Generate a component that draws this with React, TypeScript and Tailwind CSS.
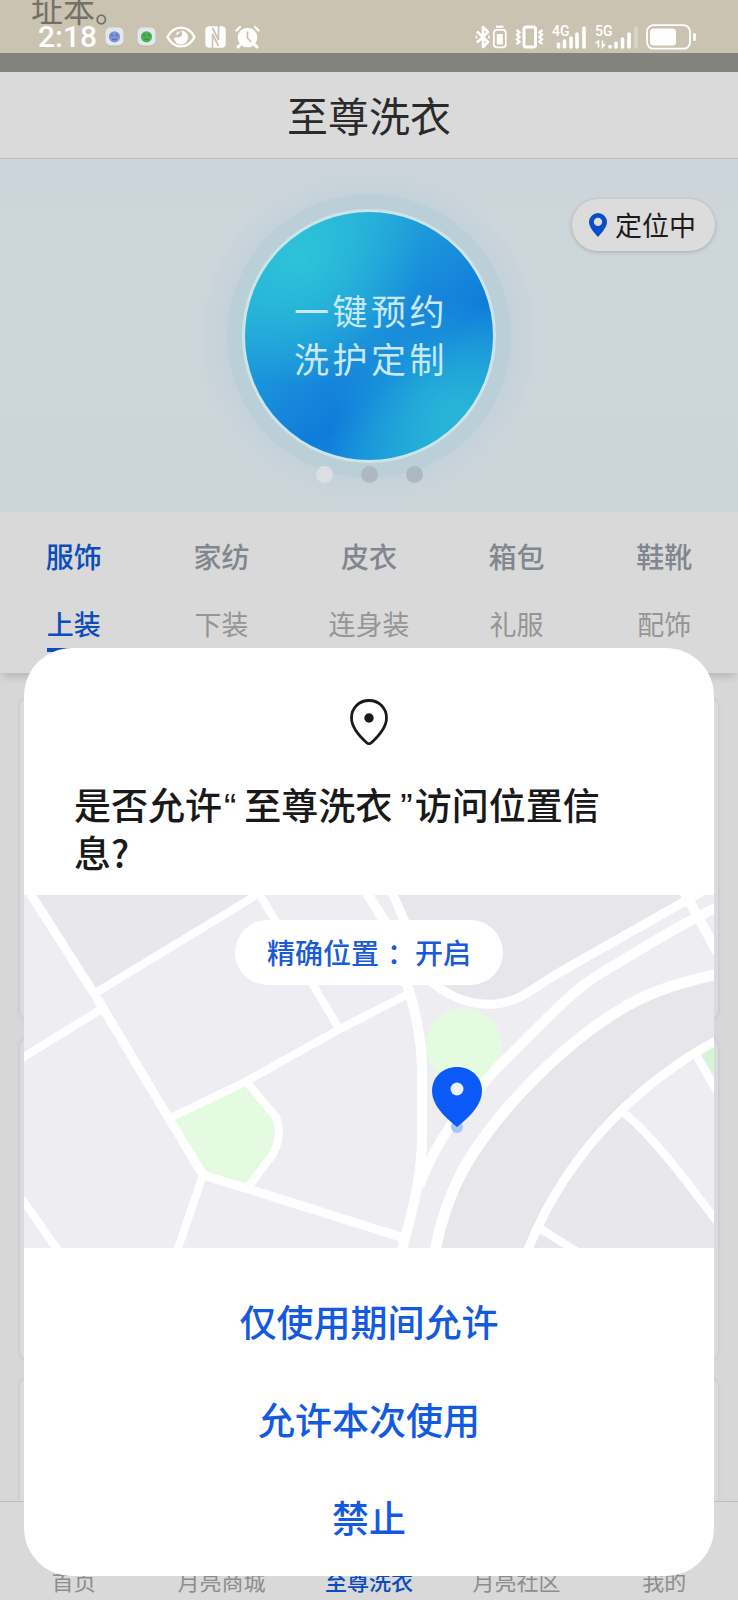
import { clsx } from "clsx"

const categories = ["服饰", "家纺", "皮衣", "箱包", "鞋靴"]
const subCategories = ["上装", "下装", "连身装", "礼服", "配饰"]
const navItems = ["首页", "月亮商城", "至尊洗衣", "月亮社区", "我的"]
const permissionActions = ["仅使用期间允许", "允许本次使用", "禁止"]

function NotificationIcon({ color, face }: { color: string; face: string }) {
  return (
    <svg className="h-5 w-[19px]" viewBox="0 0 19 20" aria-hidden="true">
      <rect x="0.5" y="1" width="18" height="18.5" rx="5" fill="#aeb3ad" />
      <rect x="0.5" y="0.5" width="18" height="18" rx="5" fill="#e3e9ea" />
      <circle cx="9.5" cy="9.8" r="5.6" fill={color} />
      <circle cx="7" cy="8.2" r="0.8" fill={face} />
      <circle cx="12" cy="8.2" r="0.8" fill={face} />
      <path d="M7 12q2.5 1.600 5 0" fill="none" stroke={face} strokeWidth="0.7" />
    </svg>
  )
}

function EyeIcon() {
  return (
    <svg className="h-[22px] w-[30px]" viewBox="0 0 30 22" aria-hidden="true">
      <path d="M1.500 11C8-1.500 22-1.500 28.500 11 22 23.500 8 23.500 1.500 11z" fill="none" stroke="#fff" strokeWidth="2.400" />
      <circle cx="15" cy="11.500" r="7" fill="#fff" />
      <path d="M8 6.500c2-3 5-4 7-3.500-1 2 3 4.500.5 7-2 2.500-5 1-7.500 2z" fill="#cbc3b2" />
      <path d="M10.500 8.500q1-2 3-2.500" fill="none" stroke="#fff" strokeWidth="1.500" />
    </svg>
  )
}

function NfcIcon() {
  return (
    <svg className="h-[22px] w-[21px]" viewBox="0 0 21 22" aria-hidden="true">
      <rect x="0.300" y="0.300" width="20.400" height="21.400" rx="4" fill="#fff" />
      <path d="M7.500 22V8l6 12M13.500 0v14l-6-12" fill="none" stroke="#cbc3b2" strokeWidth="1.700" />
    </svg>
  )
}

function AlarmIcon() {
  return (
    <svg className="h-6 w-[25px]" viewBox="0 0 25 24" aria-hidden="true">
      <circle cx="12.500" cy="12.500" r="9.800" fill="#fff" />
      <path d="M1.500 5.500 5 2M23.500 5.500 20 2" stroke="#fff" strokeWidth="2.400" strokeLinecap="round" />
      <path d="M6 19l-3 3M19 19l3 3" stroke="#fff" strokeWidth="3" strokeLinecap="round" />
      <path d="M12.500 6.500v6.500l3.500 4" fill="none" stroke="#cbc3b2" strokeWidth="1.800" />
    </svg>
  )
}

function BluetoothIcon() {
  return (
    <svg className="h-6 w-8" viewBox="0 0 32 24" aria-hidden="true">
      <path d="M2 6.500l11 10.500-5 5V2l5 5L2 17.500" fill="none" stroke="#fff" strokeWidth="2.600" strokeLinejoin="round" />
      <path d="M1.500 10.500v3M14 10.500v3" stroke="#fff" strokeWidth="1.500" />
      <rect x="18.800" y="4.800" width="12" height="17.500" rx="3" fill="none" stroke="#fff" strokeWidth="1.700" />
      <path d="M21 1.700h7.500" stroke="#fff" strokeWidth="2.200" />
      <rect x="21.800" y="9" width="6" height="10.500" fill="#fff" />
    </svg>
  )
}

function VibrateIcon() {
  return (
    <svg className="h-6 w-[29px]" viewBox="0 0 29 24" aria-hidden="true">
      <rect x="9" y="2" width="11.500" height="20" rx="2" fill="none" stroke="#fff" strokeWidth="3" />
      <path d="M1.500 5l3 2.300L2 9.700l2.500 2.300L2 14.300l2.500 2.300-3 2.400M27.500 5l-3 2.300L27 9.700 24.500 12l2.500 2.300-2.500 2.300 3 2.400" fill="none" stroke="#fff" strokeWidth="2.300" />
    </svg>
  )
}

function SignalIcon({ label, weak }: { label: string; weak?: boolean }) {
  return (
    <svg className={clsx("h-[26px]", weak ? "w-[43px]" : "w-[35px]")} viewBox={weak ? "0 0 43 26" : "0 0 35 26"} role="img" aria-label={label}>
      <text x="0" y="12" fill="#fff" fontFamily="Roboto, sans-serif" fontSize="14" fontWeight="500">
        {label}
      </text>
      {weak ? (
        <g strokeLinecap="round" strokeWidth="3.600" stroke="#fff">
          <path d="M15 22.500v.5M21 19v4M27.500 15v8M34 10v13" />
          <path d="M41 4v19" opacity=".3" />
          <path d="M3.500 23v-6l-2.500 2M7.500 17v6l2-2.500" strokeWidth="1.500" fill="none" />
        </g>
      ) : (
        <path d="M6.500 20v3M12.500 17v6M19 14v9M25 10v13M32 4v19" stroke="#fff" strokeWidth="3.600" strokeLinecap="round" />
      )}
    </svg>
  )
}

function BatteryIcon() {
  return (
    <svg className="h-[26px] w-[51px]" viewBox="0 0 51 26" aria-hidden="true">
      <rect x="1" y="1.200" width="43" height="23.500" rx="6.500" fill="none" stroke="#fff" strokeWidth="1.800" />
      <rect x="4" y="4.500" width="26" height="17" rx="3.500" fill="#fff" />
      <path d="M48.500 10.500v5" stroke="#fff" strokeWidth="3" strokeLinecap="round" />
    </svg>
  )
}

function StatusBar() {
  return (
    <div className="relative flex h-[53px] items-center justify-between overflow-hidden bg-[#cbc3b2] pt-5 pr-[41px] pl-[38px]">
      <p className="absolute -top-4 left-[31px] text-[32px] leading-[48px] text-[#747067]">址本。</p>
      <div className="relative flex items-center">
        <span className="font-[Roboto,sans-serif] text-[30px] leading-8 font-medium text-white">2:18</span>
        <div className="ml-2 flex items-center gap-[13px]">
          <NotificationIcon color="#7d92d8" face="#3a4d9c" />
          <NotificationIcon color="#4faf57" face="#2c7c36" />
        </div>
        <div className="ml-2.5 flex items-center gap-[9px]">
          <EyeIcon />
          <NfcIcon />
          <AlarmIcon />
        </div>
      </div>
      <div className="flex items-center gap-2">
        <BluetoothIcon />
        <VibrateIcon />
        <SignalIcon label="4G" />
        <SignalIcon label="5G" weak />
        <BatteryIcon />
      </div>
    </div>
  )
}

function Hero() {
  return (
    <section className="relative flex flex-col items-center overflow-hidden bg-linear-to-b from-[#cdd4dc] via-[#cdd6da] via-20% to-[#ccd5d9] pt-2 pb-[7px]">
      <div className="rounded-full bg-[radial-gradient(circle_closest-side,#c5d2da_84%,#cad4da_97%,transparent)] p-[27px]">
        <div className="rounded-full bg-[#bbcfd8] p-[15px]">
          <button className="flex size-[254px] flex-col items-center justify-center rounded-full border-3 border-[#cde4ea] bg-[radial-gradient(ellipse_at_22%_18%,#2dc3d8_0%,#2dc3d800_45%),radial-gradient(ellipse_at_85%_85%,#27b4d8_5%,#27b4d800_42%),linear-gradient(142deg,#26b0da_15%,#1b94da_40%,#1684da_54%,#0f7bdb_64%,#1c98da_85%)] pb-1 pl-1 text-[35px] leading-12 tracking-widest text-[#c8e9f3]">
            <span>一键预约</span>
            <span>洗护定制</span>
          </button>
        </div>
      </div>
      <div className="absolute inset-x-0 bottom-[29px] flex justify-center gap-7">
        <span className="size-[17px] rounded-full bg-[#dbdfe2]" />
        <span className="size-[17px] rounded-full bg-[#acb9c1]" />
        <span className="size-[17px] rounded-full bg-[#acb9c1]" />
      </div>
      <button className="absolute top-10 right-[23px] flex h-[52px] items-center gap-2 rounded-full bg-[#dcdcdc] pr-[19px] pl-[17px] text-[27px] text-[#1c1c1c] shadow-[0_1px_4px_rgba(0,0,0,0.2)]">
        <svg className="h-6 w-[18px]" viewBox="0 0 18 24" aria-hidden="true">
          <path fillRule="evenodd" d="M9 0a9 9 0 0 1 9 9c0 4-3.500 9-9 15C3.500 18 0 13 0 9a9 9 0 0 1 9-9zm0 4.700a4.200 4.200 0 1 0 0 8.400 4.200 4.200 0 0 0 0-8.400z" fill="#0b4dc6" />
        </svg>
        定位中
      </button>
    </section>
  )
}

function Tabs() {
  return (
    <div className="relative bg-[#d9d9d9] pt-[19px] pb-[21px] shadow-[0_7px_7px_-3px_rgba(0,0,0,0.14)]">
      <div className="grid grid-cols-5">
        {categories.map((item, i) => (
          <button key={item} className={clsx("h-[50px] text-[28px] font-medium", i === 0 ? "text-[#0d4cbb]" : "text-[#81868f]")}>
            {item}
          </button>
        ))}
      </div>
      <div className="mt-[21px] grid grid-cols-5 justify-items-center">
        {subCategories.map((item, i) => (
          <button
            key={item}
            className={clsx("h-[50px] border-b-4 pb-0.5 text-[27px]", i === 0 ? "border-[#0d4cbb] font-medium text-[#0d4cbb]" : "border-transparent text-[#959595]")}
          >
            {item}
          </button>
        ))}
      </div>
    </div>
  )
}

function LocationMap() {
  return (
    <svg className="block w-full" viewBox="0 0 690 353" role="img" aria-label="地图">
      <rect width="690" height="353" fill="#eeedf2" />
      <path d="M6 0h227L73 97z" fill="#e8e7eb" />
      <path d="M369 0h295L531 80c-40 22-50 29-64 29-28 0-45-12-60-30z" fill="#e7e6ea" />
      <path d="M690 80c-50 10-72 18-99 38-90 62-175 140-179 235h92c10-50 50-100 87-131 40-35 60-50 99-75z" fill="#e7e6ea" />
      <path d="M504 353c10-50 50-100 94-138 30 26 63 67 92 107v31z" fill="#e8e7eb" />
      <circle cx="440" cy="151" r="38" fill="#e4fbe2" />
      <path d="M150 224l71-36 30 35q7 18-2 35l-25 32-43-12z" fill="#e4fbe2" />
      <path d="M677 158l13-9v31z" fill="#d5f5d3" />
      <g fill="none" stroke="#fff" strokeWidth="8">
        <path d="M4-5 73 103 144 222 179 280 221 293 380 343" strokeWidth="9" />
        <path d="M-2 163 76 115M73 97 236-2" />
        <path d="M233-5 288 88 314 132M146 223l75-36 93-52 72-37" />
        <path d="M221 185l31 37q7 18-3 37l-24 32M-2 304l37 53M179 280 153 356" />
        <path d="M341-5 361 27 384 92C392 118 398 145 398 175v65C398 285 388 315 378 356" strokeWidth="10" />
        <path d="M367-5 381 27C387 62 400 85 420 96c20 12 35 14 51 13 25-2 40-17 60-29L677-3" strokeWidth="9" />
        <path d="M694 12C650 32 615 56 577 78 545 98 521 126 474 172 438 212 410 248 395 292" strokeWidth="10" />
        <path d="M694 79C650 89 622 98 591 118 553 142 515 177 484 212 445 258 422 296 411 357" strokeWidth="11" />
        <path d="M694 145C660 162 620 192 591 222 553 260 522 308 503 357" strokeWidth="9" />
        <path d="M594 213c34 26 68 73 100 115M671 158 694 198M512 331l40 25" />
        <path d="M659-5 694 58" strokeWidth="10" />
      </g>
      <circle cx="433" cy="232" r="6" fill="#a9c5f6" />
      <path d="M433 172c14 0 25 10 25 24 0 13-11 25-25 36-14-11-25-23-25-36 0-14 11-24 25-24z" fill="#0b59f7" />
      <circle cx="433" cy="194" r="6.500" fill="#eef2fb" />
    </svg>
  )
}

function PermissionDialog() {
  return (
    <div className="absolute inset-x-6 bottom-6 overflow-hidden rounded-[48px] bg-white pt-[51px] pb-2" role="dialog" aria-labelledby="permission-title">
      <svg className="mx-auto h-[46px] w-[38px]" viewBox="0 0 38 46" aria-hidden="true">
        <path d="M19 1.500c10 0 17.500 7.500 17.500 17.500 0 9-6.500 17-15.500 25q-2 1.500-4 0C8 36 1.500 28 1.500 19 1.500 9 9 1.500 19 1.500z" fill="none" stroke="#1a1a1a" strokeWidth="2.800" />
        <circle cx="19" cy="19" r="4.700" fill="#1a1a1a" />
      </svg>
      <h2 id="permission-title" className="mt-[35px] mb-[19px] pr-[74px] pl-[50px] text-[37px] leading-12 font-medium text-[#191919]">
        是否允许<span className="mr-2 ml-0.5 font-['Liberation_Sans',sans-serif] leading-none font-normal">“</span>至尊洗衣<span className="mr-0.5 ml-2 font-['Liberation_Sans',sans-serif] leading-none font-normal">”</span>访问位置信息?
      </h2>
      <div className="relative">
        <LocationMap />
        <button className="absolute inset-x-0 top-[25px] mx-auto flex h-[65px] w-fit items-center rounded-full bg-white px-8 pb-0.5 text-[28px] font-medium text-[#1a5ad8]">
          精确位置<span className="ml-2">：</span>开启
        </button>
      </div>
      <div className="flex flex-col pt-[25px] pb-px">
        {permissionActions.map((action) => (
          <button key={action} className="h-[98px] text-[37px] font-medium text-[#145ae0]">
            {action}
          </button>
        ))}
      </div>
    </div>
  )
}

export default function App() {
  return (
    <div className="relative flex min-h-screen flex-col bg-[#d7d7d8] font-['Noto_Sans_CJK_SC',sans-serif]">
      <StatusBar />
      <div className="h-[19px] bg-[#83827f]" />
      <header className="flex h-[87px] items-center justify-center border-b border-[#b9bcbf] bg-[#dbdada] pb-0.5">
        <h1 className="text-[41px] leading-[60px] text-[#2b2a2a]">至尊洗衣</h1>
      </header>
      <Hero />
      <Tabs />
      <main className="flex flex-1 flex-col gap-5 px-5 pt-[26px]">
        <div className="h-80 rounded-lg bg-[#dadbdc] shadow-[0_0_4px_#b4c2cc]" />
        <div className="h-80 rounded-lg bg-[#dadbdc] shadow-[0_0_4px_#b4c2cc]" />
        <div className="flex-1 rounded-t-lg bg-[#dadbdc] shadow-[0_0_4px_#b4c2cc]" />
      </main>
      <nav className="relative grid h-[99px] grid-cols-5 items-end border-t border-[#bfbfbf] bg-[#d9d9d9] pb-1">
        {navItems.map((item) => (
          <a key={item} href="#" className={clsx("text-center text-[22px] leading-8", item === "至尊洗衣" ? "font-medium text-[#0d4cbb]" : "text-[#8d8d8d]")}>
            {item}
          </a>
        ))}
      </nav>
      <PermissionDialog />
    </div>
  )
}
